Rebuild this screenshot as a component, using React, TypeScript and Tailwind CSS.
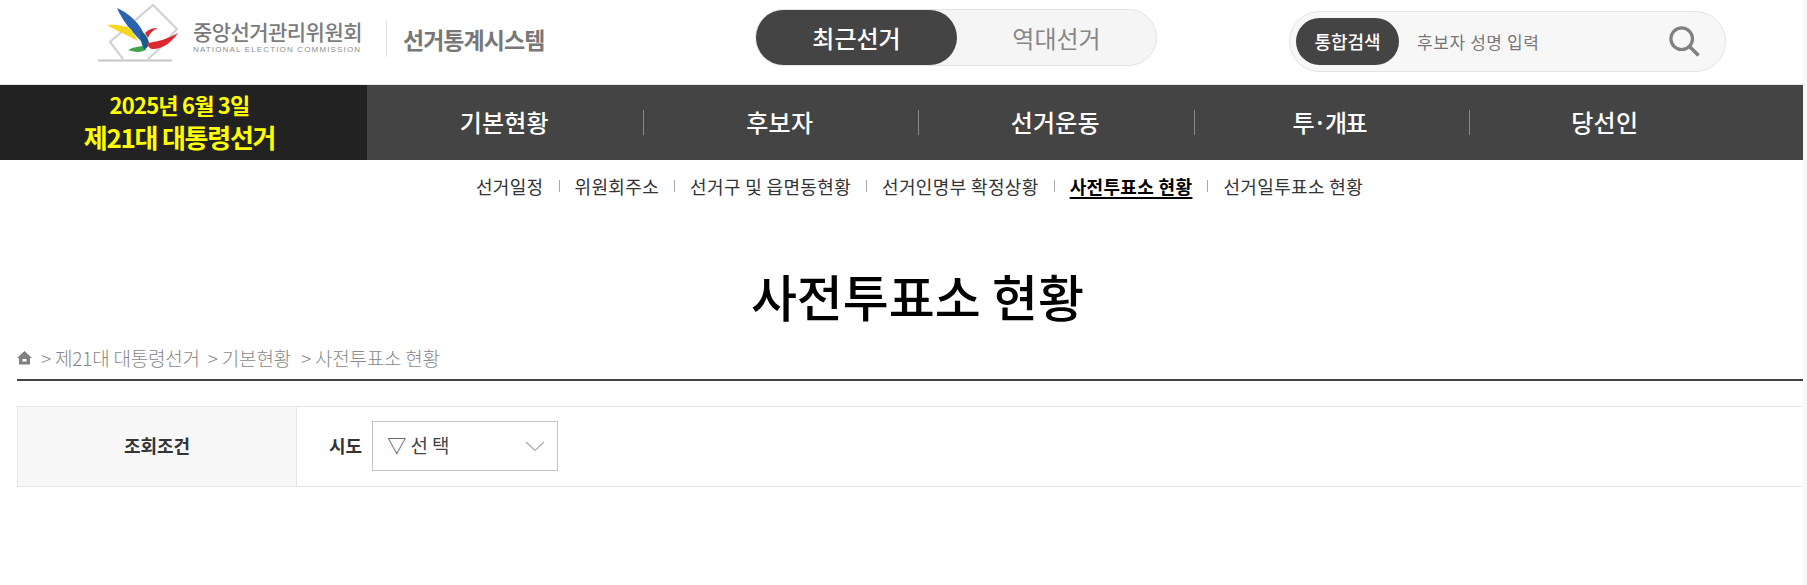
const FONT = "font-['Noto_Sans_CJK_KR','Noto_Sans',sans-serif]";

function Logo() {
  return (
    <svg width="92" height="66" viewBox="0 0 92 66" className="shrink-0 blur-[0.4px]">
      <path d="M8 60.5H82" stroke="#c6c6c6" strokeWidth="2" fill="none" />
      <path d="M33 59 L20 42 L63 5 L87 29 L68 50 L58 59" stroke="#d2d2d2" strokeWidth="2.2" fill="none" />
      <path d="M27 8 C38 13 47 21 52 30 L57 43 L52 42 C42 32 32 20 27 8Z" fill="#2b64ae" />
      <path d="M17 25 C27 24 35 26 41 29 L48 41 C37 35 27 31 17 25Z" fill="#f5d71e" />
      <path d="M38 50 C44 47 49 46 55 46 L56 50 C50 53 44 52 38 50Z" fill="#3fa34d" />
      <path d="M50 30 C55 33 59 39 59 44 C58 47 56 49 54 49 C51 44 50 37 50 30Z" fill="#1d5b8e" />
      <path d="M55 33 C59 29 63 28 68 28 C63 30 60 33 58 38Z" fill="#da2a30" />
      <path d="M57 43 C66 42 78 39 88 33 C82 42 73 49 63 49 C60 49 58 47 57 43Z" fill="#da2a30" />
    </svg>
  );
}

const navItems = ["기본현황", "후보자", "선거운동", "투·개표", "당선인"];
const subItems = ["선거일정", "위원회주소", "선거구 및 읍면동현황", "선거인명부 확정상황", "사전투표소 현황", "선거일투표소 현황"];

export default function App() {
  return (
    <div className={`w-[1807px] h-[585px] bg-[#f8f8f8] overflow-hidden flex ${FONT}`}>
      <div className="w-[1803px] h-full bg-white shrink-0">
        <header className="h-[85px] border-b border-[#e5e5e5] flex items-start">
          <div className="w-[755px] flex items-center pl-[90px] shrink-0">
            <Logo />
            <div className="flex flex-col items-start ml-[11px] mt-[5px]">
              <span className="text-[21px] leading-[28px] font-medium tracking-[-0.55px] text-[#7b7b7b]">중앙선거관리위원회</span>
              <span className="text-[8px] leading-[10px] tracking-[1.15px] font-medium text-[#8e8e8e] font-['Liberation_Sans',sans-serif]">NATIONAL ELECTION COMMISSION</span>
            </div>
            <span className="w-px h-[37px] bg-[#e3e3e3] ml-[24px] mt-[11px]" />
            <span className="ml-[16px] mt-[11px] text-[23px] leading-[30px] font-bold tracking-[-0.95px] text-[#777777]">선거통계시스템</span>
          </div>
          <div className="mt-[9px] w-[402px] h-[57px] rounded-full border border-[#e3e3e3] bg-[#f5f5f5] flex shrink-0">
            <button className="w-[201px] h-[55px] rounded-full bg-[#444444] text-white text-[24px] font-medium leading-[55px]">최근선거</button>
            <button className="flex-1 h-[55px] text-[#888888] text-[24px] leading-[55px]">역대선거</button>
          </div>
          <div className="ml-[132px] mt-[11px] w-[437px] h-[61px] rounded-full border border-[#e3e3e3] bg-[#f7f7f7] flex items-center pl-[6px] pr-[25px] shrink-0">
            <span className="w-[103px] h-[47px] rounded-full bg-[#444444] text-white text-[18px] font-medium flex items-center justify-center">통합검색</span>
            <span className="ml-[18px] text-[#777777] text-[17px] tracking-[0.6px]">후보자 성명 입력</span>
            <svg width="31" height="31" viewBox="0 0 33 33" className="ml-auto" fill="none" stroke="#808080">
              <circle cx="13.5" cy="13.5" r="11.5" strokeWidth="3.4" />
              <path d="M21.5 21.5 L31.5 31.5" strokeWidth="3.8" />
            </svg>
          </div>
        </header>

        <nav className="h-[75px] flex bg-[#444444]">
          <div className="w-[367px] bg-[#222222] flex flex-col items-center justify-center pr-[8px] pb-[4px] text-[#ffff00] font-bold shrink-0">
            <span className="text-[22px] leading-[32px] tracking-[-0.8px]">2025년 6월 3일</span>
            <span className="text-[26px] leading-[33px] tracking-[-1.25px]">제21대 대통령선거</span>
          </div>
          <ul className="flex items-center ml-[1px]">
            {navItems.map((n, i) => (
              <li key={n} className={`w-[275.5px] h-[25px] pb-[2px] flex items-center justify-center text-white text-[24px] font-medium relative ${i === 3 ? "tracking-[-1.6px] pr-[6px]" : i === 4 ? "tracking-[0.2px] pr-[6px]" : "tracking-[0.2px] pr-[3px]"}`}>
                {n}
                {i < 4 && <span className="absolute right-0 top-0 w-px h-[25px] bg-[#8a8a8a]" />}
              </li>
            ))}
          </ul>
        </nav>

        <ul className="h-[66px] flex items-center justify-center pb-[14px] pl-[36px]">
          {subItems.map((s, i) => (
            <li key={s} className="flex items-center">
              {i > 0 && <span className="w-px h-[12px] bg-[#aaaaaa] mx-[15px]" />}
              <span className={`text-[18px] leading-[26px] tracking-[0.35px] ${i === 4 ? "font-bold text-black underline underline-offset-[3px] decoration-[2px]" : "text-[#333333]"}`}>{s}</span>
            </li>
          ))}
        </ul>

        <h1 className="text-center text-[50px] leading-[60px] font-medium text-black mt-[39px] pl-[32px]">사전투표소 현황</h1>

        <div className="ml-[17px]">
          <div className="h-[56px] pt-[19px] border-b-2 border-[#444444] flex items-start text-[19px] leading-[28px] font-light text-[#888888] tracking-[-0.2px]">
            <svg width="15" height="14" viewBox="0 0 15 14" className="mt-[7px] mr-[9px]" fill="#808080" fillRule="evenodd">
              <path d="M7.5 0 L15 7 H13 V13.5 H2 V7 H0Z M5.5 8 V10.5 H9.5 V8Z" />
            </svg>
            <span>&gt; 제21대 대통령선거</span>
            <span className="ml-[8px]">&gt; 기본현황</span>
            <span className="ml-[10px]">&gt; 사전투표소 현황</span>
          </div>
          <div className="mt-[25px] h-[81px] border-y border-l border-[#e5e5e5] flex">
            <div className="w-[279px] pb-[2px] bg-[#f7f7f7] border-r border-[#e5e5e5] flex items-center justify-center text-[18px] font-bold text-[#333333] tracking-[-0.1px]">조회조건</div>
            <div className="flex items-center pl-[32px] pb-[2px]">
              <span className="text-[18px] font-bold text-[#333333] mr-[10px]">시도</span>
              <div className="w-[186px] h-[50px] border border-[#c4c4c4] flex items-center pl-[14px] pr-[12px] text-[19px] text-[#444444]">
                <span>▽ 선 택</span>
                <svg width="20" height="10" viewBox="0 0 20 10" className="ml-auto" fill="none" stroke="#aaaaaa" strokeWidth="1.2">
                  <path d="M1 1 L10 9.5 L19 1" />
                </svg>
              </div>
            </div>
          </div>
        </div>
      </div>
    </div>
  );
}
